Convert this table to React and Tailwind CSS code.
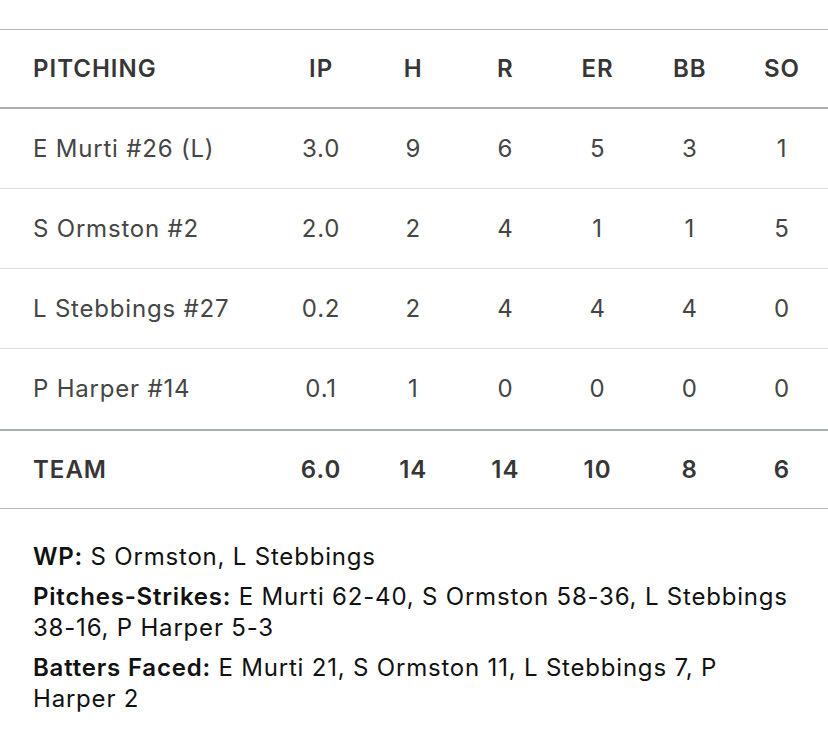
const pitchers = [
  { name: "E Murti #26 (L)", stats: ["3.0", "9", "6", "5", "3", "1"] },
  { name: "S Ormston #2", stats: ["2.0", "2", "4", "1", "1", "5"] },
  { name: "L Stebbings #27", stats: ["0.2", "2", "4", "4", "4", "0"] },
  { name: "P Harper #14", stats: ["0.1", "1", "0", "0", "0", "0"] },
];

const columns = ["IP", "H", "R", "ER", "BB", "SO"];
const team = ["6.0", "14", "14", "10", "8", "6"];

const rowGrid = "grid grid-cols-[275px_repeat(6,1fr)] items-center h-[80px]";

export default function App() {
  return (
    <div className="min-h-screen bg-white pt-[29px] font-['Inter','Liberation_Sans',sans-serif]">
      {/* Header */}
      <div className={`${rowGrid} border-t border-b-2 border-t-[#b8b8b8] border-b-[#a9afb1] text-[24px] font-semibold tracking-[1px] text-[#363636]`}>
        <div className="pl-[33px]">PITCHING</div>
        {columns.map((c) => (
          <div key={c} className="text-center">
            {c}
          </div>
        ))}
      </div>

      {/* Pitchers */}
      {pitchers.map((p, i) => (
        <div
          key={p.name}
          className={`${rowGrid} text-[24px] tracking-[0.8px] text-[#454545] ${i < pitchers.length - 1 ? "border-b border-[#dcdfdf]" : ""}`}
        >
          <div className="pl-[33px]">{p.name}</div>
          {p.stats.map((s, j) => (
            <div key={j} className="text-center">
              {s}
            </div>
          ))}
        </div>
      ))}

      {/* Team totals */}
      <div className={`${rowGrid} border-t-2 border-b border-t-[#a8b1b1] border-b-[#b8b8b8] text-[24px] font-semibold tracking-[1px] text-[#363636]`}>
        <div className="pl-[33px]">TEAM</div>
        {team.map((s, j) => (
          <div key={j} className="text-center">
            {s}
          </div>
        ))}
      </div>

      {/* Notes */}
      <div className="pl-[33px] pr-[30px] pt-[32px] text-[24px] leading-[31px] tracking-[0.8px] text-[#111]">
        <p className="mb-[9px]">
          <span className="font-semibold">WP:</span> S Ormston, L Stebbings
        </p>
        <p className="mb-[9px]">
          <span className="font-semibold">Pitches-Strikes:</span> E Murti 62-40, S Ormston 58-36, L Stebbings{" "}
          <span className="whitespace-nowrap">38-16</span>, P Harper{" "}
          <span className="whitespace-nowrap">5-3</span>
        </p>
        <p>
          <span className="font-semibold">Batters Faced:</span> E Murti 21, S Ormston 11, L Stebbings 7, P Harper 2
        </p>
      </div>
    </div>
  );
}
